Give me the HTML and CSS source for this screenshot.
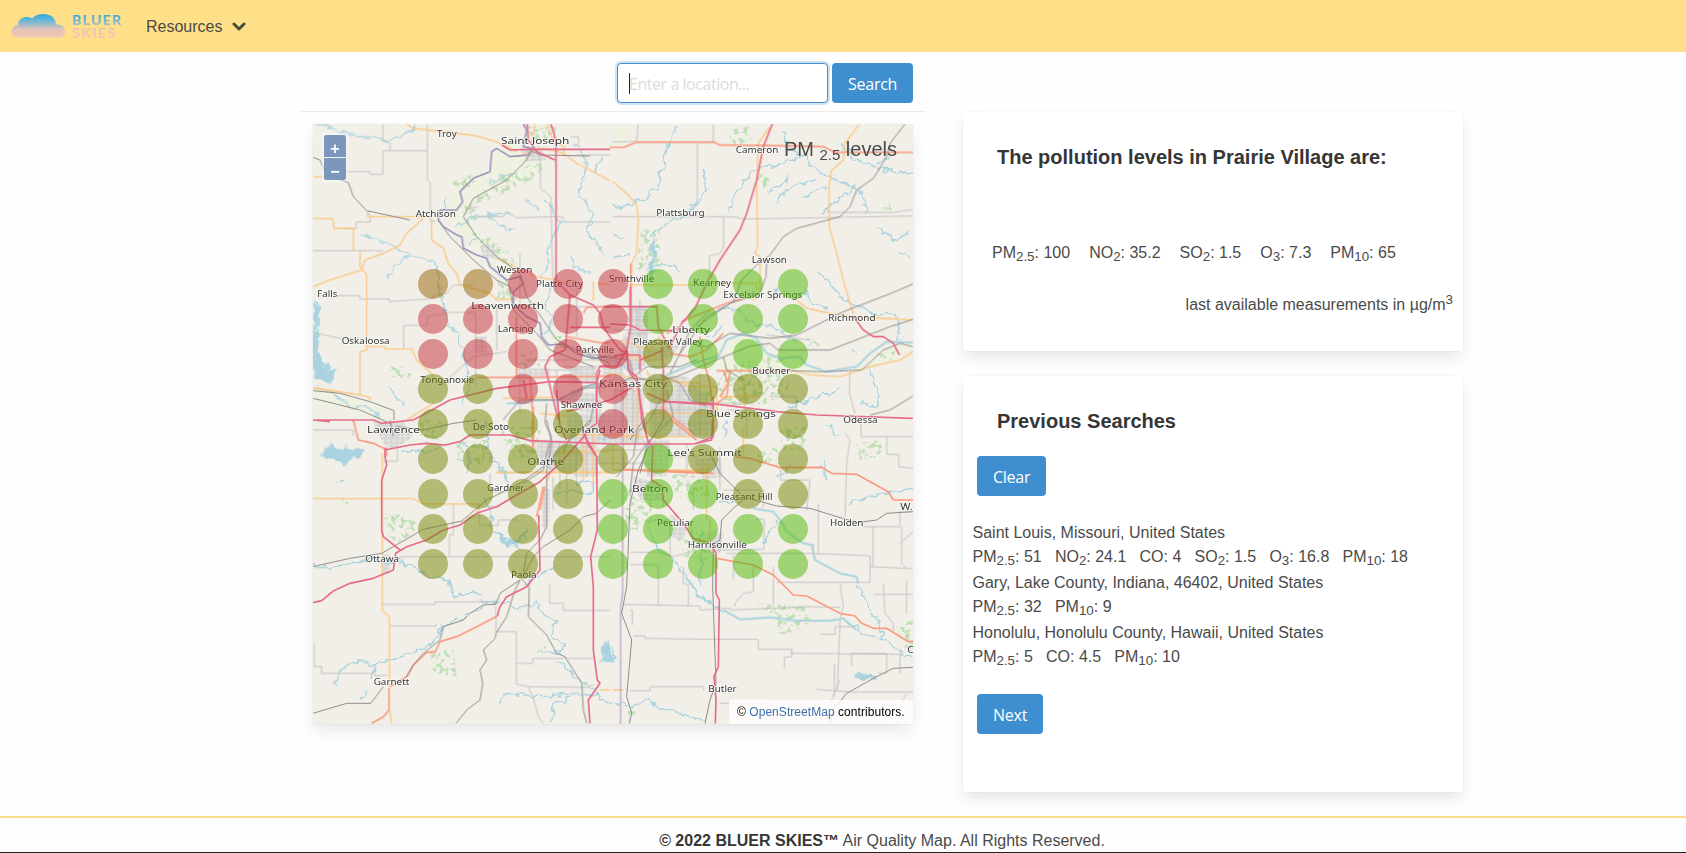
FILE: index.html
```html
<!DOCTYPE html>
<html lang="en">
<head>
<meta charset="utf-8">
<title>Bluer Skies</title>
<link rel="stylesheet" href="styles.css">
</head>
<body>
<nav class="navbar">
  <svg class="logo" width="112" height="28" viewBox="0 0 112 28" role="img" aria-label="Bluer Skies">
    <defs>
      <linearGradient id="sky" gradientUnits="userSpaceOnUse" x1="0" y1="2" x2="0" y2="26">
        <stop offset="0" stop-color="#2fa9e0"/><stop offset=".25" stop-color="#62b6d8"/><stop offset=".65" stop-color="#e6c3b9"/><stop offset="1" stop-color="#f3c6b4"/>
      </linearGradient>
    </defs>
    <path fill="url(#sky)" d="M6 25.500a6 6 0 0 1 1-12C6 6 16 3 21 6.500C28-1 45 1 45 12.500C56 11.500 57 25.500 48 25.500Z"/>
    <g class="logo-text" fill="url(#sky)">
      <text x="61" y="12.500" textLength="49">BLUER</text>
      <text x="61" y="25.500" textLength="43">SKIES</text>
    </g>
  </svg>
  <a class="nav-link">Resources
    <svg class="chevron" width="14" height="10" viewBox="0 0 14 10"><path d="M2 2l5 5 5-5"/></svg>
  </a>
</nav>
<main class="main">
  <section class="left">
    <div class="search">
      <div class="field"><input class="input" type="text" placeholder="Enter a location..."><span class="caret"></span></div>
      <button class="button search-button">Search</button>
    </div>
    <div class="map">
      <svg class="tiles" viewBox="9 12 1800 1800" width="600" height="600">
        <defs>
          <pattern id="streets" width="17" height="13" patternUnits="userSpaceOnUse"><rect width="17" height="13" fill="#e6e4e1"/><path d="M0 3H17M6 0V13" stroke="#c9c8c8" stroke-width="2.4"/></pattern>
          <filter id="wiggle" x="-5%" y="-5%" width="110%" height="110%"><feTurbulence type="fractalNoise" baseFrequency=".04" numOctaves="2" seed="4"/><feDisplacementMap in="SourceGraphic" scale="30" xChannelSelector="R" yChannelSelector="G"/></filter>
          <filter id="speckle"><feTurbulence type="fractalNoise" baseFrequency=".07" numOctaves="3" seed="8"/><feColorMatrix values="0 0 0 0 0 0 0 0 0 0 0 0 0 0 0 9 0 0 0 -4.6"/><feComposite in="SourceGraphic" operator="in"/></filter>
        </defs>
        <rect x="9" y="12" width="1800" height="1800" fill="#f2efe9"/>

        <g class="meadow">
          <path d="M545 90L640 60 690 130 650 170 590 195 490 240 465 300 530 360 610 440 640 470 600 480 520 400 450 350 400 270 440 200 480 160 540 150Z"/>
          <path transform="translate(900 0)" d="M330 680L400 640 450 660 500 720 560 720 640 760 560 770 470 760 340 760 310 720ZM760 730L830 680 900 670 905 690 790 745Z"/>
          <path transform="translate(900 0)" d="M20 12H50V60L10 100Z"/>
          <path d="M730 640L800 690 900 720 870 740 750 700ZM9 810L120 830 240 870 200 890 9 850Z"/>
        </g>
        <g class="wood" filter="url(#speckle)">
          <path d="M480 235L530 205 600 150 690 130 700 160 640 190 560 230 500 250ZM425 185L480 165 510 190 440 210ZM480 340L540 340 600 400 620 440 580 430 520 390ZM455 260L490 250 500 300 470 320ZM230 740L300 740 305 775 240 770ZM560 480L610 480 600 540 560 540ZM620 700L680 690 690 740 630 750ZM720 640L770 650 780 690 740 680ZM640 20L740 20 730 60 660 60Z"/>
          <path transform="translate(900 0)" d="M350 30L420 20 430 60 370 80ZM90 330L150 330 150 460 80 450ZM440 160L480 170 475 205 440 200ZM340 740L520 700 540 820 470 850 350 860 320 800ZM240 830L300 810 330 880 260 890ZM590 650L640 670 600 690ZM800 700L860 690 840 730ZM820 255L850 250 850 275 820 270Z"/>
          <path transform="translate(0 900)" d="M570 20L690 20 690 130 600 120ZM220 280L330 290 310 340 260 370 220 330ZM360 690L430 690 440 770 370 760ZM80 235L120 235 110 260ZM330 0L410 0 390 60 330 50ZM670 670L710 680 690 710ZM440 60L530 60 520 140 440 120Z"/>
          <path transform="translate(900 900)" d="M440 550L600 560 600 610 510 650 500 600ZM740 70L820 60 810 120 750 120ZM440 100L500 80 520 130 450 140ZM500 20L600 20 580 90 520 90ZM40 200L130 200 120 330 50 330ZM180 160L290 170 300 230 200 230ZM190 330L320 330 300 420 220 410ZM50 860L80 860 70 905 50 900ZM860 620L909 600 909 700 890 690Z"/>
        </g>
        <g fill="url(#streets)">
          <path transform="translate(570 510)" d="M385 50H440V200H400L385 150ZM370 130L440 180 540 160 520 200 440 220 400 250 360 230ZM310 190H370V260H310ZM340 250L430 280 430 460 340 460ZM110 450L290 450V560H230L150 540 110 500ZM200 370H360V460H200ZM50 235H150V265H50ZM450 250L560 260 640 340 640 440 450 440ZM210 230H290V280H210ZM430 450L510 450 500 560 440 560ZM210 300L290 310 290 370 210 360Z"/>
          <path d="M630 85L690 80 710 120 650 125ZM495 650H530V700H495ZM510 380L545 370 570 420 520 410Z"/>
          <path transform="translate(0 900)" d="M190 5L280 5 310 50 250 90 220 70ZM700 200L720 210 715 330 695 320ZM215 405H240V460H215Z"/>
          <path transform="translate(900 900)" d="M70 170L150 190 160 240 90 240ZM250 120L330 110 340 170 280 180ZM180 280L230 320 220 360 180 350ZM285 340L340 340 330 400 290 400Z"/>
        </g>

        <g class="lake" filter="url(#wiggle)">
          <path d="M5 630L30 630 25 690 55 755 85 740 60 790 20 780 5 740ZM9 550L35 560 25 600 9 640Z"/>
          <path transform="translate(0 900)" d="M35 105L60 70 75 90 110 80 160 88 155 108 125 115 100 138 85 120 55 115ZM545 330L580 345 590 360 620 360 655 318 645 355 620 375 640 395 605 380 575 365ZM880 670L895 665 912 730 870 725Z"/>
          <path transform="translate(900 0)" d="M125 360L140 350 135 450 145 445 120 480 110 455 125 410ZM485 500L510 508 495 520Z"/>
          <path transform="translate(900 900)" d="M735 762L800 765 805 775 745 778Z"/>
        </g>
        <g class="river" filter="url(#wiggle)">
          <path d="M20 10L120 45 240 60 300 40 320 10M150 340L230 370 300 405 370 420 390 500 410 610 440 640 470 740 480 800 460 850M300 410L260 430 235 470M410 230L405 260 390 285M440 320L480 295 600 280M535 280L560 310 605 330M790 60L830 130 810 220 850 280 830 330 880 400M880 110L850 160M710 240L750 310 710 390 720 440 690 470M780 400L790 440 840 460M9 540L35 560 20 640M480 380L500 355M280 850L240 810M20 800L60 815 120 860 190 865 210 900M720 490L710 570 730 610 700 640M540 190L600 160M650 240L690 270"/>
          <path transform="translate(900 0)" d="M200 15L160 110 150 190 100 240 9 265M280 150L290 210 230 280 160 320 120 350M120 450L160 430 210 450M9 410L60 405M520 30L530 80 580 110 620 150 700 190 750 210 770 280M580 110L490 140 430 150 370 230 360 280M540 170L480 215M620 180L540 200 500 250M660 200L580 230M740 195L680 240 640 280M690 70L740 120 820 150 909 160M840 105L800 130M800 320L850 360 900 340M870 400L909 410M620 450L650 480 700 540 760 570 860 590 870 660M580 510L610 550 650 570M320 560L380 570 430 610 480 620 560 660M730 680L740 700M530 860L570 850 620 830 690 810M780 750L810 830 800 860 750 850M9 350L45 355M300 650L340 620"/>
          <path transform="translate(0 900)" d="M9 440L90 440 180 420 280 425 350 465 420 480 430 525 500 520 530 550 600 545 620 570 680 545 700 590 740 600 720 650 760 670 750 700 700 700M530 550L480 580 400 620 370 670 300 700 200 735 150 720 90 750 80 800M200 740L180 780M740 720L830 800 900 850M570 850L590 820 700 830 800 820 870 830M790 830L730 850 725 910M640 500L680 470 740 440M460 60L480 130 470 160M530 0L530 100 580 160 600 210M270 90L350 100 420 70M740 220L850 220 850 190 800 190M520 230L550 300 540 330M170 810L150 840M80 190L100 180M880 20L890 90"/>
          <path transform="translate(900 900)" d="M120 330L140 380 200 430 240 490 280 540 340 570M270 340L275 420 270 500M710 600L760 640 820 660 909 720M740 490L770 550 810 610 820 660M460 370L500 300M720 250L780 230 850 215 909 208M500 170L550 140M9 850L70 860 100 840 180 870 280 900M650 10L680 50M640 120L650 180M9 680L10 720M330 250L370 240M350 0L340 60"/>
        </g>
        <g class="river wide">
          <path transform="translate(900 0)" d="M160 770L230 740 280 720 325 710 350 660 400 640 440 655 470 700 510 715 570 710 590 735 650 755 740 740 780 700 830 665 909 668"/>
          <path transform="translate(900 900)" d="M430 265L490 275 510 300 530 335 580 370 605 375 615 420 690 460 740 470 745 490M340 570L390 598 480 592 560 602 660 602 700 595 740 630"/>
          <path transform="translate(570 510)" d="M330 205L380 235 400 265 440 270M20 340L70 340 110 330 200 330 260 290 300 285"/>
        </g>
        <g class="minor">
          <path d="M219 12V60L240 70V92H352M352 12V180L361 190V300L377 305M240 92H219V163H179V155H90M174 275L181 290V306H139V325L105 326M9 392H220M504 262H482V285M620 293L590 275 580 290H504M620 293L730 290 760 292V306H900M691 100V205L723 230 728 480 738 520M35 527H150V537H238V545L366 536V530L410 520 430 495H490M150 655H90L20 640M281 685V616H351V590L420 577H497V800M497 560H560V690M410 780L490 710 590 695M805 50V80M800 105H900M630 400V560M781 50H805M780 560H900M640 720H900M760 740H860"/>
          <path transform="translate(900 0)" d="M9 66L80 64 84 12M310 12V66M262 70V240L250 270M9 290H370L400 297 909 288M341 290V380L330 400 298 408V470M658 277H850L909 268M720 755L718 820 735 880M9 630H80V560M470 645L600 660M480 830H560V870M160 660V700M30 560H145"/>
          <path transform="translate(0 900)" d="M9 30H130V48M262 80V124H220M430 252V345H418V410M270 410H900M508 250V316H565V300H620M719 490V550H760V571H900M215 553H375V546L560 545M240 618H378V610M35 760H195V768L230 765M13 670V740H35V760M558 560V635H619V792L655 800 830 802 850 794M619 730H668V715H850M560 158H660M729 170V270M770 160V250M520 260H570M540 160V215H600M655 800L670 835 685 890 700 910"/>
          <path transform="translate(900 900)" d="M60 397H150L190 410 240 395M60 434H145V555M40 553L270 558V570L360 565V570L600 560 690 562M220 440V490L235 495V560M60 570H67V615M70 648H105V655L300 658H445V688H545V700L870 703M545 690V710L523 712V745M120 800H280V812M60 812H120V800M330 850H480M430 440V515L400 520 375 550V560M490 440V560M350 400H610M320 390L462 388V297H440M370 405V480M500 487H780V408L665 402H610V370M780 440L909 446M875 320V430L890 445M690 490L700 560 690 600 682 810M620 808L720 816H909M789 320V440M760 320H870V275H909M870 370L909 335M753 10V50H909M705 40L720 60 710 130 705 290M830 50V103H866V140L909 145M512 145V180H600L590 270M625 250V400M890 480L889 580M820 490L825 580 850 610V635M870 760V700M630 643H675V620H735M673 730V830M725 740V700H830V760H805M660 850L690 780M100 200H160V260M250 200V270M180 410V300H120M340 210H460V260M790 523H909M889 820L870 860 862 910"/>
          <path transform="translate(570 510)" d="M230 0V140M240 240H130M60 250V370M170 240V370M200 330H280M300 300V440M400 290V440M440 60V180M540 280V440M600 250V430M640 340H760M130 490H290M150 460V550M180 460V600M230 460V590M260 460V560M290 480H430M290 520H470M450 360H640M450 400H640M560 460V560M500 500H600M660 470V600M420 30V270M380 60H440M385 90H450M380 130H450M680 360H740V440"/>
        </g>
        <g class="secondary">
          <path d="M9 170H110M290 12L310 25 440 40 500 48 560 65 620 95M9 296H68L72 325H130V392M9 500L60 480 155 450 165 420 220 400 270 375 290 340 340 295M173 275V290H370M150 392V440L170 465V690L150 695V825L90 815 9 803M365 300V360L400 385 415 430 440 460 450 495 540 520 560 540 620 535M170 680H225V687H305L320 720 370 765M620 110L700 85 762 100 800 130 900 182M675 12L665 70M710 12L730 60 762 80V108M560 415L680 470 730 480 780 490M865 490L900 495M9 805L150 825 180 832V840M850 485V540M290 900L370 850"/>
          <path transform="translate(900 0)" d="M9 185L50 220 80 255 85 300 80 400 65 430V500M480 20L445 70 440 200 443 380 435 400 450 410V520L430 540M748 12L705 70 700 120 665 150 657 200 658 320 680 400 705 500 730 580M65 495H250M250 488L440 490V510M560 540L590 565 660 580 735 590 820 595 909 600M540 750L600 765 690 770 780 740 870 720 909 695M400 770L405 880M160 720H70M170 770L240 800H320V890"/>
          <path transform="translate(0 900)" d="M9 236H310L340 252H505L500 280M217 100V572L238 590V800M238 870L245 910M560 157H900M870 810H900M710 185L720 160M820 50V180M850 30V190M740 95H900M760 70V150"/>
          <path transform="translate(900 900)" d="M290 130V300M400 20V110M9 810H40M20 50H250M9 75V150H300M300 300V390"/>
          <path transform="translate(570 510)" d="M360 150L450 180 480 140M375 200H470M320 250L450 270 600 280M430 370H640M370 300V520M410 280V450M440 240L460 300M200 435H420M110 546H280M250 460V550M9 325L170 322M120 370L200 378M660 320H780"/>
        </g>
        <g class="trunk">
          <path d="M619 590V770M500 772H660L900 768M770 650L870 668H900M820 580L830 562 900 560M660 770L668 880"/>
          <path transform="translate(900 0)" d="M0 82H40L80 67H312L330 75 560 78 640 80 675 97H909M62 430V620M215 605L260 585 350 550 415 530 435 520M180 700L240 710 290 690 340 640M270 650L280 720 300 790 310 890M320 752H430L540 750M340 752L355 790 330 830"/>
          <path transform="translate(0 900)" d="M130 0L145 60 190 70 220 85H230V110M704 200L690 270M185 910L220 890 237 870V805M240 800L290 770 310 735 350 697H375L390 665 440 650 500 620 562 588M668 0V100"/>
          <path transform="translate(900 900)" d="M185 0L260 60M375 110L420 115 510 143 635 142 665 160 740 163 780 185 835 215 850 240H909M320 415L430 435 490 465 550 525 590 528 690 580 735 588 755 610 790 625H830L895 665H909M45 148L230 155 310 160"/>
          <path transform="translate(570 510)" d="M390 0V100M370 500V540L620 550M480 350L540 400 580 430M100 350V470M130 590L110 680M690 240L680 320 650 340M500 130L540 110"/>
        </g>
        <g class="border"><path d="M640 12L650 30 640 80 665 85 655 105 600 110 560 85 545 95 540 155 490 175 450 215 458 245 440 270 390 270 385 300 400 320 440 345 455 350 460 385 500 405 530 415 540 440 590 480 630 470 640 490 610 515 610 555 650 590 690 610 695 650 715 675 760 672 800 700 850 715 890 710"/><path d="M938 790V1420L932 1460V1812" class="faint"/></g>
        <g class="rail">
          <path d="M9 112L30 120 50 165 115 188 130 230 170 272 300 300M670 90L640 130 590 180 490 235 460 290 500 350 560 410 630 460 650 530 700 600 740 660 800 690 900 730M385 300L420 350 490 420 560 480 600 500 610 570 680 640 720 690 850 740M668 95L690 105 840 108M9 812L90 820 180 845 252 872V900M9 835L150 870 240 910"/>
          <path transform="translate(900 0)" d="M885 12L840 70 830 110 790 175 740 210 720 260 690 290 560 325 520 350 480 405 440 435 395 480 370 545 290 590 210 700 180 760M470 420L468 470 450 520 360 550 260 620M909 492L830 525 700 575 560 645 480 655 360 640 290 680 240 670M909 598L840 620 660 690 505 690 480 670 420 678 330 715 200 770 150 780 60 775M909 680L870 670 820 690 755 750 640 755 540 752M340 710L350 750 400 780M909 828L840 870 780 885"/>
          <path transform="translate(0 900)" d="M9 440L120 415 215 400 340 328 455 303 530 240 630 190 700 140 760 80 840 0M240 0L250 50M260 20L340 30 430 10 500 0M710 0L725 70 710 150V320L690 360 650 400 640 460M640 470L670 410 700 380 780 330 820 290 860 280 900 240M630 480L570 520 558 552 520 555 480 580 460 600 400 620 390 660 340 700 310 735 290 770M630 480L615 510 590 590 558 640 555 655 520 690 530 720 510 750 518 790 510 840 470 870 438 910M635 478L658 500 655 590 710 645 740 700 765 710 815 790 820 870 830 910M220 800L182 850 110 850 9 880"/>
          <path transform="translate(900 900)" d="M60 60L100 0M120 70L85 150 60 250 50 500 35 580 65 660 50 830 65 880 58 910M160 0L110 80 90 160M300 100L330 160 400 230 500 258 600 265 740 308 800 300 830 280 909 275M400 240L370 265 335 300 330 360 310 370 308 500 318 790 300 840 285 910M909 742L850 745 800 770 710 820 670 870 660 910"/>
          <path transform="translate(570 510)" d="M9 390L60 330 170 330 250 295 330 290 400 260 390 210 310 200 230 180M180 330L250 290 340 270M400 260L440 230 540 230 590 210M480 255L540 280 570 330 620 350M140 340L135 400 155 440 140 490 130 540 70 580M280 350L270 400 210 440 190 490M480 330L450 390 410 430 400 500 350 560M500 300L520 380 440 460 400 520 390 610M540 190L570 120 630 60"/>
        </g>
        <g class="motorway">
          <path d="M575 75L600 90 660 88H900M652 12L655 60 680 95 735 120M722 12L732 40 738 70V480L780 525M780 525L768 660 765 690 720 710 705 740 720 800 745 900M780 525L850 555 870 580 880 620 900 650M780 622H900M310 900L420 840 560 805 720 785 860 788M640 780L650 835M900 738H870L860 760V850"/>
          <path transform="translate(900 0)" d="M487 12L460 80 440 180 410 280 390 330 330 420 290 490 255 565 215 610 180 680M62 500V620L50 690 60 760 85 790 95 900M-20 560H140L145 620 180 690M0 612L60 615 90 630 190 632M0 650L30 690 60 705H90V750M90 720L160 690M730 590L760 630 790 650 820 650 850 670 868 705M160 845L300 850 500 875 620 885 909 895M155 680L160 760V900"/>
          <path transform="translate(0 900)" d="M9 0L60 5M225 85V110L230 135 215 180V330L220 350 270 390M9 548L35 542 70 513 120 490 190 475 250 450 257 400 290 380 350 360 400 330 450 315 500 280 560 260 620 225 690 185 750 130 830 40M225 90L300 75 350 70 405 75 450 65 480 45 600 45 660 62 900 72M686 285L690 450 650 500 590 530 570 560 562 588M820 30L835 75 860 110 862 330 842 410 850 500V690L862 780 870 790 835 840 840 910M20 0L190 0 215 10 310 0"/>
          <path transform="translate(900 900)" d="M0 72H110L250 72 305 60 308 0M95 0L115 65 128 80 125 180 155 200 160 240 220 310 250 355 300 370 318 400V520L328 540 325 740 312 770 318 840 316 910"/>
          <path transform="translate(570 510)" d="M340 200L380 190 385 240 410 260 420 330 440 440M300 240L290 280V400L250 430 290 500V560M300 230H350L380 180M170 300L180 410 200 450M200 365L330 330 400 290M640 320V440L590 460M440 310L500 335 640 345"/>
        </g>
        <g class="label">
          <text x="381" y="50" textLength="59" lengthAdjust="spacingAndGlyphs">Troy</text>
          <text class="city" x="573" y="71" textLength="205" lengthAdjust="spacingAndGlyphs">Saint Joseph</text>
          <text x="317" y="292" textLength="121" lengthAdjust="spacingAndGlyphs">Atchison</text>
          <text x="561" y="460" textLength="106" lengthAdjust="spacingAndGlyphs">Weston</text>
          <text x="678" y="502" textLength="141" lengthAdjust="spacingAndGlyphs">Platte City</text>
          <text x="22" y="531" textLength="60" lengthAdjust="spacingAndGlyphs">Falls</text>
          <text class="city" x="484" y="568" textLength="218" lengthAdjust="spacingAndGlyphs">Leavenworth</text>
          <text x="563" y="635" textLength="108" lengthAdjust="spacingAndGlyphs">Lansing</text>
          <text x="95" y="672" textLength="144" lengthAdjust="spacingAndGlyphs">Oskaloosa</text>
          <text x="797" y="700" textLength="116" lengthAdjust="spacingAndGlyphs">Parkville</text>
          <text x="331" y="788" textLength="162" lengthAdjust="spacingAndGlyphs">Tonganoxie</text>
          <text x="752" y="863" textLength="125" lengthAdjust="spacingAndGlyphs">Shawnee</text>
          <text class="city" x="867" y="801" textLength="205" lengthAdjust="spacingAndGlyphs">Kansas City</text>
          <text class="city" x="733" y="938" textLength="240" lengthAdjust="spacingAndGlyphs">Overland Park</text>
          <text class="city" x="171" y="939" textLength="159" lengthAdjust="spacingAndGlyphs">Lawrence</text>
          <text x="488" y="930" textLength="109" lengthAdjust="spacingAndGlyphs">De Soto</text>
          <text class="city" x="652" y="1036" textLength="110" lengthAdjust="spacingAndGlyphs">Olathe</text>
          <text x="531" y="1114" textLength="112" lengthAdjust="spacingAndGlyphs">Gardner</text>
          <text x="166" y="1327" textLength="101" lengthAdjust="spacingAndGlyphs">Ottawa</text>
          <text x="603" y="1374" textLength="77" lengthAdjust="spacingAndGlyphs">Paola</text>
          <text x="191" y="1694" textLength="107" lengthAdjust="spacingAndGlyphs">Garnett</text>
          <text x="1277" y="99" textLength="128" lengthAdjust="spacingAndGlyphs">Cameron</text>
          <text x="1039" y="289" textLength="145" lengthAdjust="spacingAndGlyphs">Plattsburg</text>
          <text x="1325" y="428" textLength="106" lengthAdjust="spacingAndGlyphs">Lawson</text>
          <text x="897" y="485" textLength="136" lengthAdjust="spacingAndGlyphs">Smithville</text>
          <text x="1149" y="499" textLength="114" lengthAdjust="spacingAndGlyphs">Kearney</text>
          <text x="1240" y="533" textLength="237" lengthAdjust="spacingAndGlyphs">Excelsior Springs</text>
          <text x="1555" y="602" textLength="142" lengthAdjust="spacingAndGlyphs">Richmond</text>
          <text class="city" x="1087" y="640" textLength="113" lengthAdjust="spacingAndGlyphs">Liberty</text>
          <text x="970" y="675" textLength="208" lengthAdjust="spacingAndGlyphs">Pleasant Valley</text>
          <text x="1327" y="761" textLength="114" lengthAdjust="spacingAndGlyphs">Buckner</text>
          <text class="city" x="1188" y="891" textLength="210" lengthAdjust="spacingAndGlyphs">Blue Springs</text>
          <text x="1600" y="908" textLength="103" lengthAdjust="spacingAndGlyphs">Odessa</text>
          <text class="city" x="1072" y="1007" textLength="223" lengthAdjust="spacingAndGlyphs">Lee's Summit</text>
          <text class="city" x="966" y="1115" textLength="109" lengthAdjust="spacingAndGlyphs">Belton</text>
          <text x="1217" y="1140" textLength="171" lengthAdjust="spacingAndGlyphs">Pleasant Hill</text>
          <text x="1041" y="1218" textLength="110" lengthAdjust="spacingAndGlyphs">Peculiar</text>
          <text x="1133" y="1283" textLength="178" lengthAdjust="spacingAndGlyphs">Harrisonville</text>
          <text x="1560" y="1219" textLength="100" lengthAdjust="spacingAndGlyphs">Holden</text>
          <text x="1195" y="1717" textLength="85" lengthAdjust="spacingAndGlyphs">Butler</text>
          <text class="city" x="1771" y="1169" textLength="38" lengthAdjust="spacingAndGlyphs">W.</text>
          <text x="1792" y="1598" textLength="19" lengthAdjust="spacingAndGlyphs">C</text>
        </g>
        <!-- air quality samples, one dot every 135 units -->
        <g class="dots">
          <path stroke="#956400" d="M369 492h136"/>
          <path stroke="#c6313a" d="M639 492h271M369 597h541M369 702h541M639 807h271M909 912h1"/>
          <path stroke="#4cb800" d="M1044 492h406M1044 597h406M1179 702h271M1044 1017h1M909 1122h271M909 1227h541M909 1332h541"/>
          <path stroke="#738500" d="M1044 702h1M369 807h136M1044 807h406M369 912h406M1044 912h406M369 1017h541M1179 1017h271M369 1122h406M1314 1122h136M369 1227h406M369 1332h406"/>
        </g>
      </svg>
      <div class="zoom"><button>+</button><button>−</button></div>
      <div class="map-title">PM <sub>2.5</sub> levels</div>
      <div class="attribution">© <a>OpenStreetMap</a> contributors.</div>
    </div>
  </section>
  <section class="right">
    <div class="box current">
      <h2 class="title">The pollution levels in Prairie Village are:</h2>
      <div class="levels"><span>PM<sub>2.5</sub>: 100</span><span>NO<sub>2</sub>: 35.2</span><span>SO<sub>2</sub>: 1.5</span><span>O<sub>3</sub>: 7.3</span><span>PM<sub>10</sub>: 65</span></div>
      <p class="units">last available measurements in µg/m<sup>3</sup></p>
    </div>
    <div class="box previous">
      <h2 class="title">Previous Searches</h2>
      <button class="button">Clear</button>
      <div class="history">
        <p>Saint Louis, Missouri, United States</p>
        <div class="values"><span>PM<sub>2.5</sub>: 51</span><span>NO<sub>2</sub>: 24.1</span><span>CO: 4</span><span>SO<sub>2</sub>: 1.5</span><span>O<sub>3</sub>: 16.8</span><span>PM<sub>10</sub>: 18</span></div>
        <p>Gary, Lake County, Indiana, 46402, United States</p>
        <div class="values"><span>PM<sub>2.5</sub>: 32</span><span>PM<sub>10</sub>: 9</span></div>
        <p>Honolulu, Honolulu County, Hawaii, United States</p>
        <div class="values"><span>PM<sub>2.5</sub>: 5</span><span>CO: 4.5</span><span>PM<sub>10</sub>: 10</span></div>
      </div>
      <button class="button">Next</button>
    </div>
  </section>
</main>
<footer class="footer"><strong>© 2022 BLUER SKIES™</strong> Air Quality Map. All Rights Reserved.</footer>
</body>
</html>
```
FILE: styles.css
```css
* { box-sizing: border-box; }
body { margin: 0; height: 853px; overflow: hidden; display: flex; flex-direction: column; background: #fefefe; color: #4a4a4a; font: 16px/24px "Liberation Sans", Arial, sans-serif; }
p, h2 { margin: 0; }
sub, sup { font-size: 13.33px; line-height: 0; }
sub { vertical-align: -3px; }

.navbar { height: 52px; flex: none; display: flex; align-items: center; padding-left: 11px; background: #ffdf88; }
.logo { display: block; }
.logo-text { font: bold 14px Lato, "Liberation Sans", sans-serif; }
.nav-link { display: flex; align-items: center; gap: 10px; margin-left: 23px; padding-top: 1px; }
.chevron { display: block; fill: none; stroke: #4a4a3a; stroke-width: 3; stroke-linecap: round; stroke-linejoin: round; }

.main { height: 764px; flex: none; display: flex; gap: 38px; padding-left: 301px; }
.left { width: 624px; }
.search { height: 60px; display: flex; justify-content: flex-end; gap: 4px; padding: 11px 12px 0 0; border-bottom: 1px solid #ebebeb; }
.field { position: relative; width: 211px; height: 40px; }
.input { width: 100%; height: 40px; padding: 2px 11px 0; border: 1px solid #3e8ed0; border-radius: 4px; outline: none; box-shadow: 0 0 0 2px rgba(62, 142, 208, .25); background: #fff; font: 16px "Open Sans", "Noto Sans", sans-serif; letter-spacing: -.45px; }
.input::placeholder { color: #dbdbdb; opacity: 1; }
.caret { position: absolute; left: 12px; top: 10px; width: 1px; height: 21px; background: #222; }
.button { display: block; height: 40px; padding: 2px 16px 0; border: 0; border-radius: 4px; background: #3e8ed0; color: #fff; font: 16px "Open Sans", "Noto Sans", sans-serif; letter-spacing: -.25px; }
.search-button { width: 81px; }

.map { position: relative; width: 600px; height: 600px; margin: 12px 0 0 12px; box-shadow: 0 8px 16px -2px rgba(10, 10, 10, .1), 0 0 0 1px rgba(10, 10, 10, .02); }
.tiles { display: block; overflow: hidden; }
.tiles path { stroke-linejoin: round; }
.meadow { fill: #eff2e0; }
.wood { fill: #bfdfb4; }
.lake { fill: #aad3df; }
.river, .minor, .secondary, .trunk, .border, .rail, .motorway { fill: none; }
.river { stroke: #aad3df; stroke-width: 4.5; }
.river.wide { stroke-width: 6; }
.minor { stroke: #c0bfbf; stroke-width: 2.8; }
.secondary { stroke: #fbc67e; stroke-width: 4; }
.trunk { stroke: #fa9b80; stroke-width: 5; }
.border { stroke: #9a95ba; stroke-width: 5; }
.faint { stroke: #c5b3cc; }
.rail { stroke: #8f8e8c; stroke-width: 3; }
.motorway { stroke: #e66d89; stroke-width: 5; }
.label { font: 24px "Noto Sans", sans-serif; fill: #333; stroke: #fff; stroke-opacity: .7; stroke-width: 5; stroke-linejoin: round; paint-order: stroke; }
.city { font-size: 29px; }
.dots { fill: none; opacity: .5; stroke-width: 90; stroke-linecap: round; stroke-dasharray: 0 135; }

.zoom { position: absolute; left: 9px; top: 9px; display: grid; gap: 1px; padding: 2px; border-radius: 4px; background: rgba(255, 255, 255, .4); }
.zoom button { width: 22px; height: 22px; padding: 5px 0 0; border: 0; border-radius: 2px 2px 0 0; background: #7b98bc; color: #fff; font: bold 16px/16px "Liberation Sans", Arial, sans-serif; }
.zoom button:last-child { border-radius: 0 0 2px 2px; }
.map-title { position: absolute; top: 13px; right: 16px; font-size: 20px; white-space: nowrap; }
.map-title sub { font-size: 15px; vertical-align: -4px; }
.attribution { position: absolute; right: 0; bottom: 0; width: 184px; height: 24px; padding-left: 8px; border-radius: 4px 0 0; background: rgba(255, 255, 255, .8); color: #000; font-size: 12px; letter-spacing: .05px; white-space: nowrap; }
.attribution a { color: #3f6fae; }

.right { width: 500px; padding-top: 60px; }
.box { border-radius: 4px; background: #fff; box-shadow: 0 8px 16px -2px rgba(10, 10, 10, .1), 0 0 0 1px rgba(10, 10, 10, .02); }
.title { font-size: 20px; line-height: 24px; color: #363636; }
.current { height: 239px; padding: 33px 10px 0 28px; }
.current .title { padding-left: 6px; }
.levels { display: flex; gap: 19px; margin: 72px 0 0 1px; }
.units { margin-top: 28px; text-align: right; }
.previous { height: 416px; margin-top: 25px; padding: 33px 9px 0; }
.previous .title { padding-left: 25px; margin-bottom: 23px; }
.previous .button { margin-left: 5px; }
.history { margin: 25px 0 23px; padding-left: .5px; }
.values { height: 26px; display: flex; gap: 13.2px; }

.footer { flex: none; height: 37px; padding: 11px 0 0 78px; border-top: 2px solid #fadf8a; border-bottom: 1px solid #222; text-align: center; }
.footer strong { color: #363636; }
```
